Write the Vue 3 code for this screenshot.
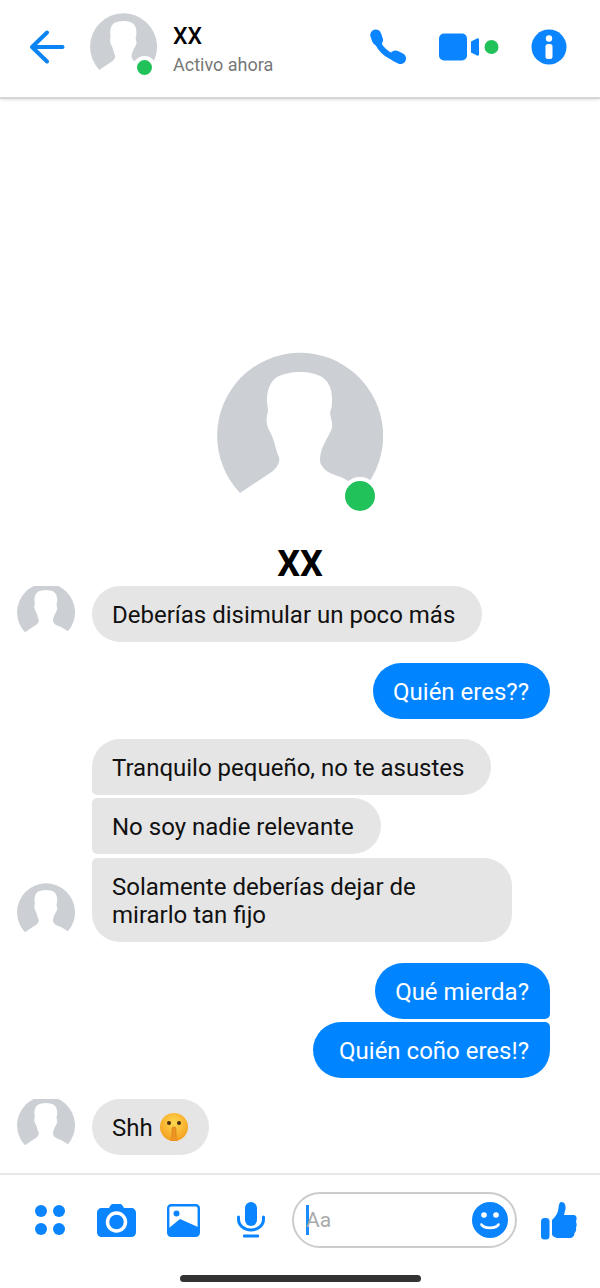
<script setup>
const silhouette = 'M23 141A83 83 0 1 1 146 138L126 126C118 123 108 120 105 114C102 110 103 105 104 100C106 92 112 84 115 76C116 70 113 65 113 60C115 56 115 52 115 47C115 36 111 29 105 25C100 22 92 20 83 20C74 20 66 22 60 25C53 30 50 38 50 48C50 52 51 56 51 60C49 65 49 72 52 78C57 86 58 95 61 103C64 108 62 113 56 119Z'

const rows = [
  { text: 'Deberías disimular un poco más', side: 'in', avatar: true, gap: 0 },
  { text: 'Quién eres??', side: 'out', gap: 21 },
  { text: 'Tranquilo pequeño, no te asustes', side: 'in', pos: 'first', gap: 20 },
  { text: 'No soy nadie relevante', side: 'in', pos: 'mid', gap: 3 },
  { text: 'Solamente deberías dejar de mirarlo tan fijo', side: 'in', pos: 'last', avatar: true, gap: 4 },
  { text: 'Qué mierda?', side: 'out', pos: 'first', gap: 21 },
  { text: 'Quién coño eres!?', side: 'out', pos: 'last wide', gap: 3 },
  { text: 'Shh', side: 'in', avatar: true, emoji: true, gap: 21 }
]
</script>

<template>
  <div class="page">
    <header class="topbar">
      <svg class="back" width="36" height="36" viewBox="0 0 36 36">
        <path d="M33.500 18H4M18 3.500L3 18L18 32.500" fill="none" stroke="#0a84f5" stroke-width="4" stroke-linecap="round" stroke-linejoin="round" />
      </svg>
      <div class="head-avatar">
        <svg class="avatar-img" viewBox="0 0 166 166"><path :d="silhouette" fill="#ccd0d5" /></svg>
        <span class="head-dot"></span>
      </div>
      <div class="head-text">
        <div class="head-name">XX</div>
        <div class="head-status">Activo ahora</div>
      </div>
      <svg class="phone" width="36" height="36" viewBox="0 0 36 36">
        <path d="M6 6.500C7 18 17 28 29.500 29.500" fill="none" stroke="#0a84ff" stroke-width="6" stroke-linecap="round" />
        <path d="M5.800 6L7.500 11M25.500 27L30.500 29.500" fill="none" stroke="#0a84ff" stroke-width="11" stroke-linecap="round" />
      </svg>
      <svg class="video" width="60" height="28" viewBox="0 0 60 28">
        <rect x="0" y="0.500" width="28" height="27" rx="5" fill="#0a84ff" />
        <path d="M32 8.500L38 5.500C39 5 40 5.500 40 6.500V21.500C40 22.500 39 23 38 22.500L32 19.500Z" fill="#0a84ff" />
        <circle cx="52.500" cy="14" r="7" fill="#22c25a" />
      </svg>
      <svg class="info" width="36" height="36" viewBox="0 0 36 36">
        <circle cx="18" cy="18" r="17.500" fill="#0a84ff" />
        <circle cx="18" cy="9.500" r="3.200" fill="#fff" />
        <rect x="14.500" y="15" width="7" height="15" rx="2.500" fill="#fff" />
      </svg>
    </header>

    <section class="profile">
      <div class="big-avatar">
        <svg class="avatar-img" viewBox="0 0 166 166"><path :d="silhouette" fill="#ccd0d5" /></svg>
        <span class="big-dot"></span>
      </div>
      <div class="big-name">XX</div>
    </section>

    <main class="messages">
      <div
        v-for="(row, i) in rows"
        :key="i"
        class="row"
        :class="row.side"
        :style="{ marginTop: row.gap + 'px' }"
      >
        <div v-if="row.side === 'in'" class="slot">
          <svg v-if="row.avatar" class="small-avatar" viewBox="0 0 166 166"><path :d="silhouette" fill="#ccd0d5" /></svg>
        </div>
        <div class="bubble" :class="row.pos">
          {{ row.text }}
          <svg v-if="row.emoji" class="emoji" width="30" height="30" viewBox="0 0 30 30" role="img" aria-label="🤫">
            <defs>
              <radialGradient id="shh" cx="50%" cy="35%" r="70%">
                <stop offset="0" stop-color="#ffd84f" />
                <stop offset="1" stop-color="#f39a1c" />
              </radialGradient>
            </defs>
            <circle cx="15" cy="15" r="14" fill="url(#shh)" />
            <circle cx="10" cy="11" r="2" fill="#4a2c10" />
            <circle cx="20" cy="11" r="2" fill="#4a2c10" />
            <rect x="13" y="15" width="4" height="12" rx="2" fill="#ee9422" stroke="#c9761a" stroke-width="0.600" />
            <path d="M11 29C11 25 13 24 15 24S19 25 19 29Z" fill="#ee9422" />
          </svg>
        </div>
      </div>
    </main>

    <footer class="composer">
      <svg class="apps" width="32" height="32" viewBox="0 0 32 32">
        <circle cx="7" cy="7" r="6" fill="#0a84ff" />
        <circle cx="25" cy="7" r="6" fill="#0a84ff" />
        <circle cx="7" cy="25" r="6" fill="#0a84ff" />
        <circle cx="25" cy="25" r="6" fill="#0a84ff" />
      </svg>
      <svg class="camera" width="39" height="33" viewBox="0 0 39 33">
        <path d="M12 4L13.500 1.500C14 .5 15 0 16 0H23C24 0 25 .5 25.500 1.500L27 4H34C37 4 39 6 39 9V28C39 31 37 33 34 33H5C2 33 0 31 0 28V9C0 6 2 4 5 4Z" fill="#0a84ff" />
        <circle cx="19.500" cy="18" r="9" fill="#0a84ff" stroke="#fff" stroke-width="3.500" />
      </svg>
      <svg class="image" width="33" height="33" viewBox="0 0 33 33">
        <rect x="1.200" y="1.200" width="30.600" height="30.600" rx="3" fill="#fff" stroke="#0a84ff" stroke-width="2.400" />
        <circle cx="9.500" cy="9.500" r="3" fill="#0a84ff" />
        <path d="M2 24L13 15L31 23V30C31 31 30 32 29 32H4C3 32 2 31 2 30Z" fill="#0a84ff" />
      </svg>
      <svg class="mic" width="28" height="36" viewBox="0 0 28 36">
        <rect x="8" y="0" width="12" height="24" rx="6" fill="#0a84ff" />
        <path d="M1.500 15V17C1.500 23.500 7 28 14 28S26.500 23.500 26.500 17V15" fill="none" stroke="#0a84ff" stroke-width="3" stroke-linecap="round" />
        <rect x="6" y="32.500" width="16" height="3" rx="1" fill="#0a84ff" />
      </svg>
      <div class="input">
        <span class="caret"></span>
        <span class="placeholder">Aa</span>
        <svg class="smile" width="36" height="36" viewBox="0 0 36 36">
          <circle cx="18" cy="18" r="18" fill="#0a84ff" />
          <circle cx="12" cy="13" r="2.800" fill="#fff" />
          <circle cx="24" cy="13" r="2.800" fill="#fff" />
          <path d="M9.500 22.500C12 27 24 27 26.500 22.500" fill="none" stroke="#fff" stroke-width="2.600" stroke-linecap="round" />
        </svg>
      </div>
      <svg class="thumb" width="36" height="38" viewBox="0 0 36 38">
        <rect x="0" y="16" width="8.500" height="21.500" rx="3.500" fill="#0a84ff" />
        <path d="M11 18C15 14 17 11 17.500 6C18 1 19 0 20.500 0C23.500 0 25 3 24.500 7L23 13H32C35 13 36 15 35.500 17.500L35 20C36 22 35.800 24 35 25.500C35.500 27.500 35 29.500 33.500 31C33.500 33.500 32 36 29 36H18C14 36 11 34 11 32Z" fill="#0a84ff" />
      </svg>
    </footer>

    <div class="home-bar"></div>
  </div>
</template>

<style>
html, body {
  margin: 0;
  background: #fff;
}
</style>

<style scoped>
.page {
  width: 600px;
  height: 1288px;
  overflow: hidden;
  display: flex;
  flex-direction: column;
  background: #fff;
  font-family: Roboto, sans-serif;
  color: #111;
}

.topbar {
  height: 97px;
  flex: none;
  display: flex;
  align-items: flex-start;
  border-bottom: 2px solid #d6d6d6;
  box-shadow: 0 1px 3px rgba(0, 0, 0, 0.12);
  padding-left: 29px;
  box-sizing: content-box;
}

.topbar svg {
  flex: none;
}

.back {
  margin-top: 29px;
}

.head-avatar {
  position: relative;
  width: 67px;
  height: 67px;
  margin-top: 13px;
  margin-left: 25px;
}

.avatar-img {
  display: block;
  width: 100%;
  height: 100%;
}

.head-dot {
  position: absolute;
  left: 43px;
  top: 43px;
  width: 15px;
  height: 15px;
  border-radius: 50%;
  background: #22c25a;
  border: 4px solid #fff;
}

.head-text {
  margin-left: 16px;
  width: 196px;
  margin-top: 23px;
}

.head-name {
  font-size: 23px;
  font-weight: 500;
  line-height: 27px;
  color: #000;
}

.head-status {
  font-size: 18px;
  line-height: 22px;
  margin-top: 4px;
  color: #777;
}

.phone {
  margin-top: 29px;
  margin-left: 1px;
}

.video {
  margin-top: 33px;
  margin-left: 33px;
}

.info {
  margin-top: 29px;
  margin-left: 32px;
}

.profile {
  height: 487px;
  flex: none;
  box-sizing: border-box;
  padding-top: 253px;
  display: flex;
  flex-direction: column;
  align-items: center;
}

.big-avatar {
  position: relative;
  width: 166px;
  height: 166px;
}

.big-dot {
  position: absolute;
  left: 124px;
  top: 125px;
  width: 30px;
  height: 30px;
  border-radius: 50%;
  background: #22c25a;
  border: 4px solid #fff;
}

.big-name {
  margin-top: 25px;
  font-size: 36px;
  line-height: 42px;
  font-weight: 700;
  color: #000;
}

.messages {
  display: flex;
  flex-direction: column;
}

.row {
  display: flex;
  align-items: flex-end;
}

.row.in {
  padding-left: 17px;
}

.row.out {
  justify-content: flex-end;
  padding-right: 50px;
}

/* avatar sits at the bottom of the row, the row height crops its top */
.slot {
  width: 58px;
  flex: none;
  margin-right: 17px;
  align-self: stretch;
  overflow: hidden;
  display: flex;
  align-items: flex-end;
}

.small-avatar {
  display: block;
  flex: none;
  width: 58px;
  height: 58px;
  margin-top: -3px;
  margin-bottom: 1px;
}

.bubble {
  box-sizing: border-box;
  max-width: 420px;
  padding: 15px 27px 13px 20px;
  font-size: 24px;
  line-height: 28px;
  border-radius: 28px;
  display: flex;
  align-items: center;
  gap: 6px;
}

.in .bubble {
  background: #e5e5e5;
  color: #111;
}

.out .bubble {
  background: #0084ff;
  color: #fff;
  padding: 15px 21px 13px 20px;
}

.out .bubble.wide {
  padding-left: 26px;
}

.in .bubble.first {
  border-bottom-left-radius: 5px;
}

.in .bubble.mid {
  border-top-left-radius: 5px;
  border-bottom-left-radius: 5px;
}

.in .bubble.last {
  border-top-left-radius: 5px;
  width: 420px;
}

.out .bubble.first {
  border-bottom-right-radius: 5px;
}

.out .bubble.last {
  border-top-right-radius: 5px;
}

.emoji {
  flex: none;
  margin: -2px -7px 0 0;
}

.composer {
  margin-top: 18px;
  height: 90px;
  flex: none;
  border-top: 2px solid #e8e8e8;
  display: flex;
  align-items: center;
  padding-left: 34px;
  padding-bottom: 18px;
  box-sizing: content-box;
}

.composer svg {
  flex: none;
}

.camera {
  margin-left: 31px;
}

.image {
  margin-left: 31px;
}

.mic {
  margin-left: 37px;
}

.input {
  position: relative;
  width: 225px;
  height: 56px;
  box-sizing: border-box;
  margin-left: 27px;
  border: 2px solid #cccccc;
  border-radius: 28px;
  display: flex;
  align-items: center;
  padding-left: 12px;
  padding-right: 7px;
  flex: none;
}

.caret {
  width: 3px;
  height: 30px;
  background: #1a8cff;
  flex: none;
}

.placeholder {
  font-size: 21px;
  color: #aaa;
  margin-left: -3px;
  flex: 1;
}

.thumb {
  margin-left: 24px;
  margin-top: 2px;
}

.home-bar {
  position: absolute;
  left: 180px;
  top: 1275px;
  width: 241px;
  height: 7px;
  border-radius: 4px;
  background: #333;
}
</style>
